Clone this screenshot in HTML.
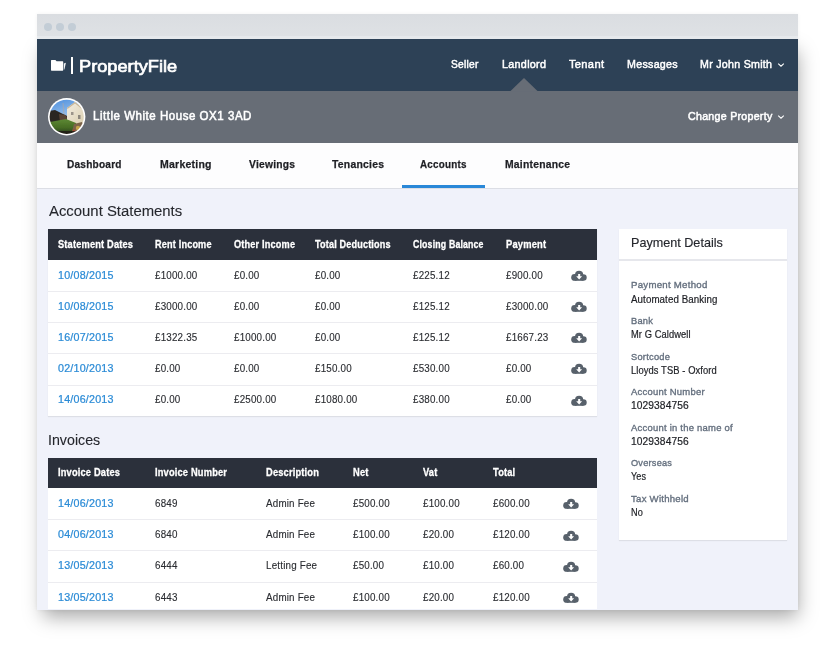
<!DOCTYPE html>
<html><head><meta charset="utf-8">
<style>
*{margin:0;padding:0;box-sizing:border-box;}
html,body{width:836px;height:650px;overflow:hidden;background:#fff;font-family:"Liberation Sans",sans-serif;}
.t{position:absolute;white-space:nowrap;line-height:1;transform-origin:0 0;}
#clip{position:absolute;left:0;top:0;width:836px;height:609px;overflow:hidden;}
</style></head>
<body>
<div style="position:absolute;left:37px;top:38px;width:761px;height:571.5px;background:#f0f2fa;box-shadow:3px 10px 18px -3px rgba(0,0,0,0.34);"></div>
<div style="position:absolute;left:37px;top:14px;width:761px;height:595.5px;background:#f0f2fa;box-shadow:0 0 4px rgba(0,0,0,0.05);"></div>
<div id="clip">
<div style="position:absolute;left:37px;top:14px;width:761px;height:25px;background:linear-gradient(#dadde1,#dfe2e5);"></div>
<div style="position:absolute;left:37px;top:36px;width:761px;height:3px;background:#e6e9ec;"></div>
<div style="position:absolute;left:44px;top:23px;width:8px;height:8px;background:#c3cdd6;border-radius:50%;"></div>
<div style="position:absolute;left:56px;top:23px;width:8px;height:8px;background:#c3cdd6;border-radius:50%;"></div>
<div style="position:absolute;left:68px;top:23px;width:8px;height:8px;background:#c3cdd6;border-radius:50%;"></div>
<div style="position:absolute;left:37px;top:39px;width:761px;height:52px;background:#2d4156;"></div>
<div style="position:absolute;left:37px;top:91px;width:761px;height:52px;background:#676d76;"></div>
<svg style="position:absolute;left:510px;top:78px" width="28" height="14"><polygon points="0,13.5 14,0 28,13.5" fill="#676d76"/></svg>
<div style="position:absolute;left:37px;top:143px;width:761px;height:45px;background:#fdfdfe;"></div>
<div style="position:absolute;left:37px;top:188px;width:761px;height:1px;background:#dcdee5;"></div>
<div style="position:absolute;left:402px;top:185px;width:83px;height:3px;background:#2a88d8;"></div>
<svg style="position:absolute;left:50px;top:59px" width="17" height="13" viewBox="0 0 17 13"><path d="M1.6 0.9 L5.4 0.9 L6.6 2.2 L12.6 2.2 Q13.2 2.2 13.2 2.8 L13.2 11.1 Q13.2 11.7 12.6 11.7 L1.6 11.7 Q1 11.7 1 11.1 L1 1.5 Q1 0.9 1.6 0.9 Z" fill="#fff"/><polygon points="13.8,4.4 15.9,3.8 14.4,10.5 13.8,10.6" fill="#f4f6f8"/></svg>
<div style="position:absolute;left:71px;top:57px;width:1.6px;height:17px;background:#fff;"></div>
<div class="t" style="left:79.00px;top:58px;font-size:17.20px;color:#fff;font-weight:normal;transform:scaleX(1.0601);-webkit-text-stroke:0.7px #fff;">PropertyFile</div>
<div class="t" style="left:450.80px;top:59px;font-size:11.40px;color:#fff;font-weight:normal;transform:scaleX(0.8972);-webkit-text-stroke:0.5px #fff;letter-spacing:0.3px;">Seller</div>
<div class="t" style="left:501.70px;top:59px;font-size:11.40px;color:#fff;font-weight:normal;transform:scaleX(0.9469);-webkit-text-stroke:0.5px #fff;letter-spacing:0.3px;">Landlord</div>
<div class="t" style="left:569.00px;top:59px;font-size:11.40px;color:#fff;font-weight:normal;transform:scaleX(0.9798);-webkit-text-stroke:0.5px #fff;letter-spacing:0.3px;">Tenant</div>
<div class="t" style="left:626.70px;top:59px;font-size:11.40px;color:#fff;font-weight:normal;transform:scaleX(0.9378);-webkit-text-stroke:0.5px #fff;letter-spacing:0.3px;">Messages</div>
<div class="t" style="left:700.00px;top:59px;font-size:11.40px;color:#fff;font-weight:normal;transform:scaleX(0.9340);-webkit-text-stroke:0.5px #fff;letter-spacing:0.3px;">Mr John Smith</div>
<svg style="position:absolute;left:776.5px;top:62px" width="8" height="6"><polyline points="1.2,1.6 4,4.2 6.8,1.6" fill="none" stroke="#fff" stroke-width="1.1"/></svg>
<svg style="position:absolute;left:47px;top:97px" width="40" height="40" viewBox="0 0 40 40">
<defs><clipPath id="cp"><circle cx="19.7" cy="19.8" r="17.1"/></clipPath>
<linearGradient id="sky" x1="0" y1="0" x2="0.3" y2="1"><stop offset="0" stop-color="#3f86dc"/><stop offset="0.6" stop-color="#9cc2ea"/><stop offset="1" stop-color="#d0dbe2"/></linearGradient>
<linearGradient id="grass" x1="0" y1="0" x2="0" y2="1"><stop offset="0" stop-color="#5e8a34"/><stop offset="0.55" stop-color="#456b24"/><stop offset="1" stop-color="#23301a"/></linearGradient>
<linearGradient id="house" x1="0" y1="0" x2="1" y2="1"><stop offset="0" stop-color="#f2ede2"/><stop offset="1" stop-color="#d9ccaa"/></linearGradient>
<filter id="bl" x="-0.1" y="-0.1" width="1.2" height="1.2"><feGaussianBlur stdDeviation="0.45"/></filter>
</defs>
<circle cx="19.7" cy="19.8" r="18.7" fill="#fff"/>
<g clip-path="url(#cp)"><g filter="url(#bl)">
<rect x="0" y="0" width="40" height="40" fill="url(#sky)"/>
<line x1="16" y1="6" x2="17" y2="18" stroke="#b9a89a" stroke-width="0.6"/>
<polygon points="2,14 8,13 14,16 20,19 21,27 2,28" fill="#2b2622"/>
<polygon points="12,17 19,18 21,25 13,25" fill="#5a4536"/>
<polygon points="20,11 28,5 36,11 40,13 40,29 20,25" fill="url(#house)"/>
<polygon points="28,5 36,11 35,12 28,6.5 20.5,12 20,11" fill="#c8b596"/>
<rect x="24" y="15" width="2.5" height="3" fill="#9b948a"/>
<rect x="31" y="18" width="2.5" height="4" fill="#8d877d"/>
<polygon points="3,25 19,22 29,26 31,33 22,38 2,38" fill="url(#grass)"/>
<polygon points="27,27 35,25 38,31 32,38 24,38" fill="#7b6448"/>
<circle cx="31" cy="31" r="2.2" fill="#c4a24a"/>
<circle cx="27" cy="34" r="1.4" fill="#a14a30"/>
<rect x="0" y="34" width="40" height="6" fill="#1f1a12" opacity="0.85"/>
</g></g></svg>
<div class="t" style="left:93.40px;top:110px;font-size:12.00px;color:#fff;font-weight:normal;transform:scaleX(0.9591);-webkit-text-stroke:0.55px #fff;letter-spacing:0.55px;">Little White House OX1 3AD</div>
<div class="t" style="left:687.70px;top:111px;font-size:11.40px;color:#fff;font-weight:normal;transform:scaleX(0.9327);-webkit-text-stroke:0.55px #fff;letter-spacing:0.3px;">Change Property</div>
<svg style="position:absolute;left:776.5px;top:114px" width="8" height="6"><polyline points="1.2,1.6 4,4.2 6.8,1.6" fill="none" stroke="#fff" stroke-width="1.1"/></svg>
<div class="t" style="left:67.00px;top:159px;font-size:11.50px;color:#1e1f24;font-weight:bold;transform:scaleX(0.8781);-webkit-text-stroke:0.25px #1e1f24;letter-spacing:0.25px;">Dashboard</div>
<div class="t" style="left:159.70px;top:159px;font-size:11.50px;color:#1e1f24;font-weight:bold;transform:scaleX(0.9145);-webkit-text-stroke:0.25px #1e1f24;letter-spacing:0.25px;">Marketing</div>
<div class="t" style="left:248.50px;top:159px;font-size:11.50px;color:#1e1f24;font-weight:bold;transform:scaleX(0.8952);-webkit-text-stroke:0.25px #1e1f24;letter-spacing:0.25px;">Viewings</div>
<div class="t" style="left:331.50px;top:159px;font-size:11.50px;color:#1e1f24;font-weight:bold;transform:scaleX(0.9060);-webkit-text-stroke:0.25px #1e1f24;letter-spacing:0.25px;">Tenancies</div>
<div class="t" style="left:420.30px;top:159px;font-size:11.50px;color:#1e1f24;font-weight:bold;transform:scaleX(0.8570);-webkit-text-stroke:0.25px #1e1f24;letter-spacing:0.25px;">Accounts</div>
<div class="t" style="left:504.50px;top:159px;font-size:11.50px;color:#1e1f24;font-weight:bold;transform:scaleX(0.9008);-webkit-text-stroke:0.25px #1e1f24;letter-spacing:0.25px;">Maintenance</div>
<div class="t" style="left:48.50px;top:204px;font-size:14.70px;color:#25272d;font-weight:normal;transform:scaleX(1.0133);-webkit-text-stroke:0.1px #25272d;">Account Statements</div>
<div class="t" style="left:48.10px;top:433px;font-size:14.70px;color:#25272d;font-weight:normal;transform:scaleX(0.9681);-webkit-text-stroke:0.1px #25272d;">Invoices</div>
<div style="position:absolute;left:48px;top:229px;width:549px;height:187px;background:#fff;box-shadow:0 1px 1px rgba(0,0,0,0.08);"></div>
<div style="position:absolute;left:48px;top:229px;width:549px;height:31px;background:#2b303b;"></div>
<div class="t" style="left:58.00px;top:239px;font-size:11.00px;color:#fff;font-weight:bold;transform:scaleX(0.8427);-webkit-text-stroke:0.3px #fff;letter-spacing:0.2px;">Statement Dates</div>
<div class="t" style="left:155.00px;top:239px;font-size:11.00px;color:#fff;font-weight:bold;transform:scaleX(0.8307);-webkit-text-stroke:0.3px #fff;letter-spacing:0.2px;">Rent Income</div>
<div class="t" style="left:233.50px;top:239px;font-size:11.00px;color:#fff;font-weight:bold;transform:scaleX(0.8344);-webkit-text-stroke:0.3px #fff;letter-spacing:0.2px;">Other Income</div>
<div class="t" style="left:315.30px;top:239px;font-size:11.00px;color:#fff;font-weight:bold;transform:scaleX(0.8260);-webkit-text-stroke:0.3px #fff;letter-spacing:0.2px;">Total Deductions</div>
<div class="t" style="left:413.00px;top:239px;font-size:11.00px;color:#fff;font-weight:bold;transform:scaleX(0.7977);-webkit-text-stroke:0.3px #fff;letter-spacing:0.2px;">Closing Balance</div>
<div class="t" style="left:506.00px;top:239px;font-size:11.00px;color:#fff;font-weight:bold;transform:scaleX(0.8502);-webkit-text-stroke:0.3px #fff;letter-spacing:0.2px;">Payment</div>
<div class="t" style="left:58.00px;top:271px;font-size:10.00px;color:#2b8bd6;font-weight:normal;transform:scaleX(1.0700);-webkit-text-stroke:0.22px #2b8bd6;letter-spacing:0.2px;">10/08/2015</div>
<div class="t" style="left:155.00px;top:271px;font-size:10.00px;color:#2a2c31;font-weight:normal;transform:scaleX(0.9800);-webkit-text-stroke:0.12px #2a2c31;letter-spacing:0.2px;">£1000.00</div>
<div class="t" style="left:233.50px;top:271px;font-size:10.00px;color:#2a2c31;font-weight:normal;transform:scaleX(0.9800);-webkit-text-stroke:0.12px #2a2c31;letter-spacing:0.2px;">£0.00</div>
<div class="t" style="left:315.30px;top:271px;font-size:10.00px;color:#2a2c31;font-weight:normal;transform:scaleX(0.9800);-webkit-text-stroke:0.12px #2a2c31;letter-spacing:0.2px;">£0.00</div>
<div class="t" style="left:413.00px;top:271px;font-size:10.00px;color:#2a2c31;font-weight:normal;transform:scaleX(0.9800);-webkit-text-stroke:0.12px #2a2c31;letter-spacing:0.2px;">£225.12</div>
<div class="t" style="left:506.00px;top:271px;font-size:10.00px;color:#2a2c31;font-weight:normal;transform:scaleX(0.9800);-webkit-text-stroke:0.12px #2a2c31;letter-spacing:0.2px;">£900.00</div>
<svg style="position:absolute;left:570px;top:270px" width="18" height="13" viewBox="0 0 18 13"><g fill="#58616b"><circle cx="9.1" cy="4.75" r="4.1"/><circle cx="4.6" cy="7.4" r="3.4"/><circle cx="13.4" cy="7.5" r="3.3"/><rect x="4.6" y="5" width="8.8" height="5.8"/></g><path d="M8.15 3.9 H10.2 V6.3 H12.1 L9.15 9.4 L6.2 6.3 H8.15 Z" fill="#fff"/></svg>
<div style="position:absolute;left:48px;top:291px;width:549px;height:1px;background:#ececf0;"></div>
<div class="t" style="left:58.00px;top:302px;font-size:10.00px;color:#2b8bd6;font-weight:normal;transform:scaleX(1.0700);-webkit-text-stroke:0.22px #2b8bd6;letter-spacing:0.2px;">10/08/2015</div>
<div class="t" style="left:155.00px;top:302px;font-size:10.00px;color:#2a2c31;font-weight:normal;transform:scaleX(0.9800);-webkit-text-stroke:0.12px #2a2c31;letter-spacing:0.2px;">£3000.00</div>
<div class="t" style="left:233.50px;top:302px;font-size:10.00px;color:#2a2c31;font-weight:normal;transform:scaleX(0.9800);-webkit-text-stroke:0.12px #2a2c31;letter-spacing:0.2px;">£0.00</div>
<div class="t" style="left:315.30px;top:302px;font-size:10.00px;color:#2a2c31;font-weight:normal;transform:scaleX(0.9800);-webkit-text-stroke:0.12px #2a2c31;letter-spacing:0.2px;">£0.00</div>
<div class="t" style="left:413.00px;top:302px;font-size:10.00px;color:#2a2c31;font-weight:normal;transform:scaleX(0.9800);-webkit-text-stroke:0.12px #2a2c31;letter-spacing:0.2px;">£125.12</div>
<div class="t" style="left:506.00px;top:302px;font-size:10.00px;color:#2a2c31;font-weight:normal;transform:scaleX(0.9800);-webkit-text-stroke:0.12px #2a2c31;letter-spacing:0.2px;">£3000.00</div>
<svg style="position:absolute;left:570px;top:301px" width="18" height="13" viewBox="0 0 18 13"><g fill="#58616b"><circle cx="9.1" cy="4.75" r="4.1"/><circle cx="4.6" cy="7.4" r="3.4"/><circle cx="13.4" cy="7.5" r="3.3"/><rect x="4.6" y="5" width="8.8" height="5.8"/></g><path d="M8.15 3.9 H10.2 V6.3 H12.1 L9.15 9.4 L6.2 6.3 H8.15 Z" fill="#fff"/></svg>
<div style="position:absolute;left:48px;top:322px;width:549px;height:1px;background:#ececf0;"></div>
<div class="t" style="left:58.00px;top:333px;font-size:10.00px;color:#2b8bd6;font-weight:normal;transform:scaleX(1.0700);-webkit-text-stroke:0.22px #2b8bd6;letter-spacing:0.2px;">16/07/2015</div>
<div class="t" style="left:155.00px;top:333px;font-size:10.00px;color:#2a2c31;font-weight:normal;transform:scaleX(0.9800);-webkit-text-stroke:0.12px #2a2c31;letter-spacing:0.2px;">£1322.35</div>
<div class="t" style="left:233.50px;top:333px;font-size:10.00px;color:#2a2c31;font-weight:normal;transform:scaleX(0.9800);-webkit-text-stroke:0.12px #2a2c31;letter-spacing:0.2px;">£1000.00</div>
<div class="t" style="left:315.30px;top:333px;font-size:10.00px;color:#2a2c31;font-weight:normal;transform:scaleX(0.9800);-webkit-text-stroke:0.12px #2a2c31;letter-spacing:0.2px;">£0.00</div>
<div class="t" style="left:413.00px;top:333px;font-size:10.00px;color:#2a2c31;font-weight:normal;transform:scaleX(0.9800);-webkit-text-stroke:0.12px #2a2c31;letter-spacing:0.2px;">£125.12</div>
<div class="t" style="left:506.00px;top:333px;font-size:10.00px;color:#2a2c31;font-weight:normal;transform:scaleX(0.9800);-webkit-text-stroke:0.12px #2a2c31;letter-spacing:0.2px;">£1667.23</div>
<svg style="position:absolute;left:570px;top:332px" width="18" height="13" viewBox="0 0 18 13"><g fill="#58616b"><circle cx="9.1" cy="4.75" r="4.1"/><circle cx="4.6" cy="7.4" r="3.4"/><circle cx="13.4" cy="7.5" r="3.3"/><rect x="4.6" y="5" width="8.8" height="5.8"/></g><path d="M8.15 3.9 H10.2 V6.3 H12.1 L9.15 9.4 L6.2 6.3 H8.15 Z" fill="#fff"/></svg>
<div style="position:absolute;left:48px;top:353px;width:549px;height:1px;background:#ececf0;"></div>
<div class="t" style="left:58.00px;top:364px;font-size:10.00px;color:#2b8bd6;font-weight:normal;transform:scaleX(1.0700);-webkit-text-stroke:0.22px #2b8bd6;letter-spacing:0.2px;">02/10/2013</div>
<div class="t" style="left:155.00px;top:364px;font-size:10.00px;color:#2a2c31;font-weight:normal;transform:scaleX(0.9800);-webkit-text-stroke:0.12px #2a2c31;letter-spacing:0.2px;">£0.00</div>
<div class="t" style="left:233.50px;top:364px;font-size:10.00px;color:#2a2c31;font-weight:normal;transform:scaleX(0.9800);-webkit-text-stroke:0.12px #2a2c31;letter-spacing:0.2px;">£0.00</div>
<div class="t" style="left:315.30px;top:364px;font-size:10.00px;color:#2a2c31;font-weight:normal;transform:scaleX(0.9800);-webkit-text-stroke:0.12px #2a2c31;letter-spacing:0.2px;">£150.00</div>
<div class="t" style="left:413.00px;top:364px;font-size:10.00px;color:#2a2c31;font-weight:normal;transform:scaleX(0.9800);-webkit-text-stroke:0.12px #2a2c31;letter-spacing:0.2px;">£530.00</div>
<div class="t" style="left:506.00px;top:364px;font-size:10.00px;color:#2a2c31;font-weight:normal;transform:scaleX(0.9800);-webkit-text-stroke:0.12px #2a2c31;letter-spacing:0.2px;">£0.00</div>
<svg style="position:absolute;left:570px;top:363px" width="18" height="13" viewBox="0 0 18 13"><g fill="#58616b"><circle cx="9.1" cy="4.75" r="4.1"/><circle cx="4.6" cy="7.4" r="3.4"/><circle cx="13.4" cy="7.5" r="3.3"/><rect x="4.6" y="5" width="8.8" height="5.8"/></g><path d="M8.15 3.9 H10.2 V6.3 H12.1 L9.15 9.4 L6.2 6.3 H8.15 Z" fill="#fff"/></svg>
<div style="position:absolute;left:48px;top:385px;width:549px;height:1px;background:#ececf0;"></div>
<div class="t" style="left:58.00px;top:395px;font-size:10.00px;color:#2b8bd6;font-weight:normal;transform:scaleX(1.0700);-webkit-text-stroke:0.22px #2b8bd6;letter-spacing:0.2px;">14/06/2013</div>
<div class="t" style="left:155.00px;top:395px;font-size:10.00px;color:#2a2c31;font-weight:normal;transform:scaleX(0.9800);-webkit-text-stroke:0.12px #2a2c31;letter-spacing:0.2px;">£0.00</div>
<div class="t" style="left:233.50px;top:395px;font-size:10.00px;color:#2a2c31;font-weight:normal;transform:scaleX(0.9800);-webkit-text-stroke:0.12px #2a2c31;letter-spacing:0.2px;">£2500.00</div>
<div class="t" style="left:315.30px;top:395px;font-size:10.00px;color:#2a2c31;font-weight:normal;transform:scaleX(0.9800);-webkit-text-stroke:0.12px #2a2c31;letter-spacing:0.2px;">£1080.00</div>
<div class="t" style="left:413.00px;top:395px;font-size:10.00px;color:#2a2c31;font-weight:normal;transform:scaleX(0.9800);-webkit-text-stroke:0.12px #2a2c31;letter-spacing:0.2px;">£380.00</div>
<div class="t" style="left:506.00px;top:395px;font-size:10.00px;color:#2a2c31;font-weight:normal;transform:scaleX(0.9800);-webkit-text-stroke:0.12px #2a2c31;letter-spacing:0.2px;">£0.00</div>
<svg style="position:absolute;left:570px;top:395px" width="18" height="13" viewBox="0 0 18 13"><g fill="#58616b"><circle cx="9.1" cy="4.75" r="4.1"/><circle cx="4.6" cy="7.4" r="3.4"/><circle cx="13.4" cy="7.5" r="3.3"/><rect x="4.6" y="5" width="8.8" height="5.8"/></g><path d="M8.15 3.9 H10.2 V6.3 H12.1 L9.15 9.4 L6.2 6.3 H8.15 Z" fill="#fff"/></svg>
<div style="position:absolute;left:618.5px;top:229px;width:168px;height:311px;background:#fff;box-shadow:0 1px 1px rgba(0,0,0,0.08);"></div>
<div style="position:absolute;left:618.5px;top:259px;width:168px;height:1.5px;background:#e6e7ec;"></div>
<div class="t" style="left:630.50px;top:236px;font-size:13.00px;color:#25272d;font-weight:normal;transform:scaleX(0.9699);-webkit-text-stroke:0.15px #25272d;">Payment Details</div>
<div class="t" style="left:630.50px;top:280px;font-size:9.80px;color:#646f7e;font-weight:normal;transform:scaleX(0.9866);-webkit-text-stroke:0.35px #646f7e;letter-spacing:0.25px;">Payment Method</div>
<div class="t" style="left:630.50px;top:295px;font-size:10.40px;color:#1d1f24;font-weight:normal;transform:scaleX(0.9364);-webkit-text-stroke:0.2px #1d1f24;letter-spacing:0.1px;">Automated Banking</div>
<div class="t" style="left:630.50px;top:316px;font-size:9.80px;color:#646f7e;font-weight:normal;transform:scaleX(0.9479);-webkit-text-stroke:0.35px #646f7e;letter-spacing:0.25px;">Bank</div>
<div class="t" style="left:630.50px;top:330px;font-size:10.40px;color:#1d1f24;font-weight:normal;transform:scaleX(0.8962);-webkit-text-stroke:0.2px #1d1f24;letter-spacing:0.1px;">Mr G Caldwell</div>
<div class="t" style="left:630.50px;top:352px;font-size:9.80px;color:#646f7e;font-weight:normal;transform:scaleX(0.9495);-webkit-text-stroke:0.35px #646f7e;letter-spacing:0.25px;">Sortcode</div>
<div class="t" style="left:630.50px;top:366px;font-size:10.40px;color:#1d1f24;font-weight:normal;transform:scaleX(0.9008);-webkit-text-stroke:0.2px #1d1f24;letter-spacing:0.1px;">Lloyds TSB - Oxford</div>
<div class="t" style="left:630.50px;top:387px;font-size:9.80px;color:#646f7e;font-weight:normal;transform:scaleX(0.9667);-webkit-text-stroke:0.35px #646f7e;letter-spacing:0.25px;">Account Number</div>
<div class="t" style="left:630.50px;top:401px;font-size:10.40px;color:#1d1f24;font-weight:normal;transform:scaleX(0.9822);-webkit-text-stroke:0.2px #1d1f24;letter-spacing:0.1px;">1029384756</div>
<div class="t" style="left:630.50px;top:423px;font-size:9.80px;color:#646f7e;font-weight:normal;transform:scaleX(0.9639);-webkit-text-stroke:0.35px #646f7e;letter-spacing:0.25px;">Account in the name of</div>
<div class="t" style="left:630.50px;top:437px;font-size:10.40px;color:#1d1f24;font-weight:normal;transform:scaleX(0.9822);-webkit-text-stroke:0.2px #1d1f24;letter-spacing:0.1px;">1029384756</div>
<div class="t" style="left:630.50px;top:458px;font-size:9.80px;color:#646f7e;font-weight:normal;transform:scaleX(0.9363);-webkit-text-stroke:0.35px #646f7e;letter-spacing:0.25px;">Overseas</div>
<div class="t" style="left:630.50px;top:472px;font-size:10.40px;color:#1d1f24;font-weight:normal;transform:scaleX(0.8740);-webkit-text-stroke:0.2px #1d1f24;letter-spacing:0.1px;">Yes</div>
<div class="t" style="left:630.50px;top:494px;font-size:9.80px;color:#646f7e;font-weight:normal;transform:scaleX(0.9804);-webkit-text-stroke:0.35px #646f7e;letter-spacing:0.25px;">Tax Withheld</div>
<div class="t" style="left:630.50px;top:508px;font-size:10.40px;color:#1d1f24;font-weight:normal;transform:scaleX(0.8812);-webkit-text-stroke:0.2px #1d1f24;letter-spacing:0.1px;">No</div>
<div style="position:absolute;left:48px;top:458px;width:549px;height:160px;background:#fff;"></div>
<div style="position:absolute;left:48px;top:458px;width:549px;height:30px;background:#2b303b;"></div>
<div class="t" style="left:58.00px;top:467px;font-size:11.00px;color:#fff;font-weight:bold;transform:scaleX(0.8450);-webkit-text-stroke:0.3px #fff;letter-spacing:0.2px;">Invoice Dates</div>
<div class="t" style="left:155.00px;top:467px;font-size:11.00px;color:#fff;font-weight:bold;transform:scaleX(0.8450);-webkit-text-stroke:0.3px #fff;letter-spacing:0.2px;">Invoice Number</div>
<div class="t" style="left:266.00px;top:467px;font-size:11.00px;color:#fff;font-weight:bold;transform:scaleX(0.8450);-webkit-text-stroke:0.3px #fff;letter-spacing:0.2px;">Description</div>
<div class="t" style="left:352.80px;top:467px;font-size:11.00px;color:#fff;font-weight:bold;transform:scaleX(0.8450);-webkit-text-stroke:0.3px #fff;letter-spacing:0.2px;">Net</div>
<div class="t" style="left:422.50px;top:467px;font-size:11.00px;color:#fff;font-weight:bold;transform:scaleX(0.8450);-webkit-text-stroke:0.3px #fff;letter-spacing:0.2px;">Vat</div>
<div class="t" style="left:492.50px;top:467px;font-size:11.00px;color:#fff;font-weight:bold;transform:scaleX(0.8450);-webkit-text-stroke:0.3px #fff;letter-spacing:0.2px;">Total</div>
<div class="t" style="left:58.00px;top:499px;font-size:10.00px;color:#2b8bd6;font-weight:normal;transform:scaleX(1.0700);-webkit-text-stroke:0.22px #2b8bd6;letter-spacing:0.2px;">14/06/2013</div>
<div class="t" style="left:155.00px;top:499px;font-size:10.00px;color:#2a2c31;font-weight:normal;transform:scaleX(0.9800);-webkit-text-stroke:0.12px #2a2c31;letter-spacing:0.2px;">6849</div>
<div class="t" style="left:266.00px;top:499px;font-size:10.00px;color:#2a2c31;font-weight:normal;transform:scaleX(0.9800);-webkit-text-stroke:0.12px #2a2c31;letter-spacing:0.2px;">Admin Fee</div>
<div class="t" style="left:352.80px;top:499px;font-size:10.00px;color:#2a2c31;font-weight:normal;transform:scaleX(0.9800);-webkit-text-stroke:0.12px #2a2c31;letter-spacing:0.2px;">£500.00</div>
<div class="t" style="left:422.50px;top:499px;font-size:10.00px;color:#2a2c31;font-weight:normal;transform:scaleX(0.9800);-webkit-text-stroke:0.12px #2a2c31;letter-spacing:0.2px;">£100.00</div>
<div class="t" style="left:492.50px;top:499px;font-size:10.00px;color:#2a2c31;font-weight:normal;transform:scaleX(0.9800);-webkit-text-stroke:0.12px #2a2c31;letter-spacing:0.2px;">£600.00</div>
<svg style="position:absolute;left:562px;top:498px" width="18" height="13" viewBox="0 0 18 13"><g fill="#58616b"><circle cx="9.1" cy="4.75" r="4.1"/><circle cx="4.6" cy="7.4" r="3.4"/><circle cx="13.4" cy="7.5" r="3.3"/><rect x="4.6" y="5" width="8.8" height="5.8"/></g><path d="M8.15 3.9 H10.2 V6.3 H12.1 L9.15 9.4 L6.2 6.3 H8.15 Z" fill="#fff"/></svg>
<div style="position:absolute;left:48px;top:519px;width:549px;height:1px;background:#ececf0;"></div>
<div class="t" style="left:58.00px;top:530px;font-size:10.00px;color:#2b8bd6;font-weight:normal;transform:scaleX(1.0700);-webkit-text-stroke:0.22px #2b8bd6;letter-spacing:0.2px;">04/06/2013</div>
<div class="t" style="left:155.00px;top:530px;font-size:10.00px;color:#2a2c31;font-weight:normal;transform:scaleX(0.9800);-webkit-text-stroke:0.12px #2a2c31;letter-spacing:0.2px;">6840</div>
<div class="t" style="left:266.00px;top:530px;font-size:10.00px;color:#2a2c31;font-weight:normal;transform:scaleX(0.9800);-webkit-text-stroke:0.12px #2a2c31;letter-spacing:0.2px;">Admin Fee</div>
<div class="t" style="left:352.80px;top:530px;font-size:10.00px;color:#2a2c31;font-weight:normal;transform:scaleX(0.9800);-webkit-text-stroke:0.12px #2a2c31;letter-spacing:0.2px;">£100.00</div>
<div class="t" style="left:422.50px;top:530px;font-size:10.00px;color:#2a2c31;font-weight:normal;transform:scaleX(0.9800);-webkit-text-stroke:0.12px #2a2c31;letter-spacing:0.2px;">£20.00</div>
<div class="t" style="left:492.50px;top:530px;font-size:10.00px;color:#2a2c31;font-weight:normal;transform:scaleX(0.9800);-webkit-text-stroke:0.12px #2a2c31;letter-spacing:0.2px;">£120.00</div>
<svg style="position:absolute;left:562px;top:530px" width="18" height="13" viewBox="0 0 18 13"><g fill="#58616b"><circle cx="9.1" cy="4.75" r="4.1"/><circle cx="4.6" cy="7.4" r="3.4"/><circle cx="13.4" cy="7.5" r="3.3"/><rect x="4.6" y="5" width="8.8" height="5.8"/></g><path d="M8.15 3.9 H10.2 V6.3 H12.1 L9.15 9.4 L6.2 6.3 H8.15 Z" fill="#fff"/></svg>
<div style="position:absolute;left:48px;top:550px;width:549px;height:1px;background:#ececf0;"></div>
<div class="t" style="left:58.00px;top:561px;font-size:10.00px;color:#2b8bd6;font-weight:normal;transform:scaleX(1.0700);-webkit-text-stroke:0.22px #2b8bd6;letter-spacing:0.2px;">13/05/2013</div>
<div class="t" style="left:155.00px;top:561px;font-size:10.00px;color:#2a2c31;font-weight:normal;transform:scaleX(0.9800);-webkit-text-stroke:0.12px #2a2c31;letter-spacing:0.2px;">6444</div>
<div class="t" style="left:266.00px;top:561px;font-size:10.00px;color:#2a2c31;font-weight:normal;transform:scaleX(0.9800);-webkit-text-stroke:0.12px #2a2c31;letter-spacing:0.2px;">Letting Fee</div>
<div class="t" style="left:352.80px;top:561px;font-size:10.00px;color:#2a2c31;font-weight:normal;transform:scaleX(0.9800);-webkit-text-stroke:0.12px #2a2c31;letter-spacing:0.2px;">£50.00</div>
<div class="t" style="left:422.50px;top:561px;font-size:10.00px;color:#2a2c31;font-weight:normal;transform:scaleX(0.9800);-webkit-text-stroke:0.12px #2a2c31;letter-spacing:0.2px;">£10.00</div>
<div class="t" style="left:492.50px;top:561px;font-size:10.00px;color:#2a2c31;font-weight:normal;transform:scaleX(0.9800);-webkit-text-stroke:0.12px #2a2c31;letter-spacing:0.2px;">£60.00</div>
<svg style="position:absolute;left:562px;top:561px" width="18" height="13" viewBox="0 0 18 13"><g fill="#58616b"><circle cx="9.1" cy="4.75" r="4.1"/><circle cx="4.6" cy="7.4" r="3.4"/><circle cx="13.4" cy="7.5" r="3.3"/><rect x="4.6" y="5" width="8.8" height="5.8"/></g><path d="M8.15 3.9 H10.2 V6.3 H12.1 L9.15 9.4 L6.2 6.3 H8.15 Z" fill="#fff"/></svg>
<div style="position:absolute;left:48px;top:582px;width:549px;height:1px;background:#ececf0;"></div>
<div class="t" style="left:58.00px;top:593px;font-size:10.00px;color:#2b8bd6;font-weight:normal;transform:scaleX(1.0700);-webkit-text-stroke:0.22px #2b8bd6;letter-spacing:0.2px;">13/05/2013</div>
<div class="t" style="left:155.00px;top:593px;font-size:10.00px;color:#2a2c31;font-weight:normal;transform:scaleX(0.9800);-webkit-text-stroke:0.12px #2a2c31;letter-spacing:0.2px;">6443</div>
<div class="t" style="left:266.00px;top:593px;font-size:10.00px;color:#2a2c31;font-weight:normal;transform:scaleX(0.9800);-webkit-text-stroke:0.12px #2a2c31;letter-spacing:0.2px;">Admin Fee</div>
<div class="t" style="left:352.80px;top:593px;font-size:10.00px;color:#2a2c31;font-weight:normal;transform:scaleX(0.9800);-webkit-text-stroke:0.12px #2a2c31;letter-spacing:0.2px;">£100.00</div>
<div class="t" style="left:422.50px;top:593px;font-size:10.00px;color:#2a2c31;font-weight:normal;transform:scaleX(0.9800);-webkit-text-stroke:0.12px #2a2c31;letter-spacing:0.2px;">£20.00</div>
<div class="t" style="left:492.50px;top:593px;font-size:10.00px;color:#2a2c31;font-weight:normal;transform:scaleX(0.9800);-webkit-text-stroke:0.12px #2a2c31;letter-spacing:0.2px;">£120.00</div>
<svg style="position:absolute;left:562px;top:592px" width="18" height="13" viewBox="0 0 18 13"><g fill="#58616b"><circle cx="9.1" cy="4.75" r="4.1"/><circle cx="4.6" cy="7.4" r="3.4"/><circle cx="13.4" cy="7.5" r="3.3"/><rect x="4.6" y="5" width="8.8" height="5.8"/></g><path d="M8.15 3.9 H10.2 V6.3 H12.1 L9.15 9.4 L6.2 6.3 H8.15 Z" fill="#fff"/></svg>
</div>
</body></html>
